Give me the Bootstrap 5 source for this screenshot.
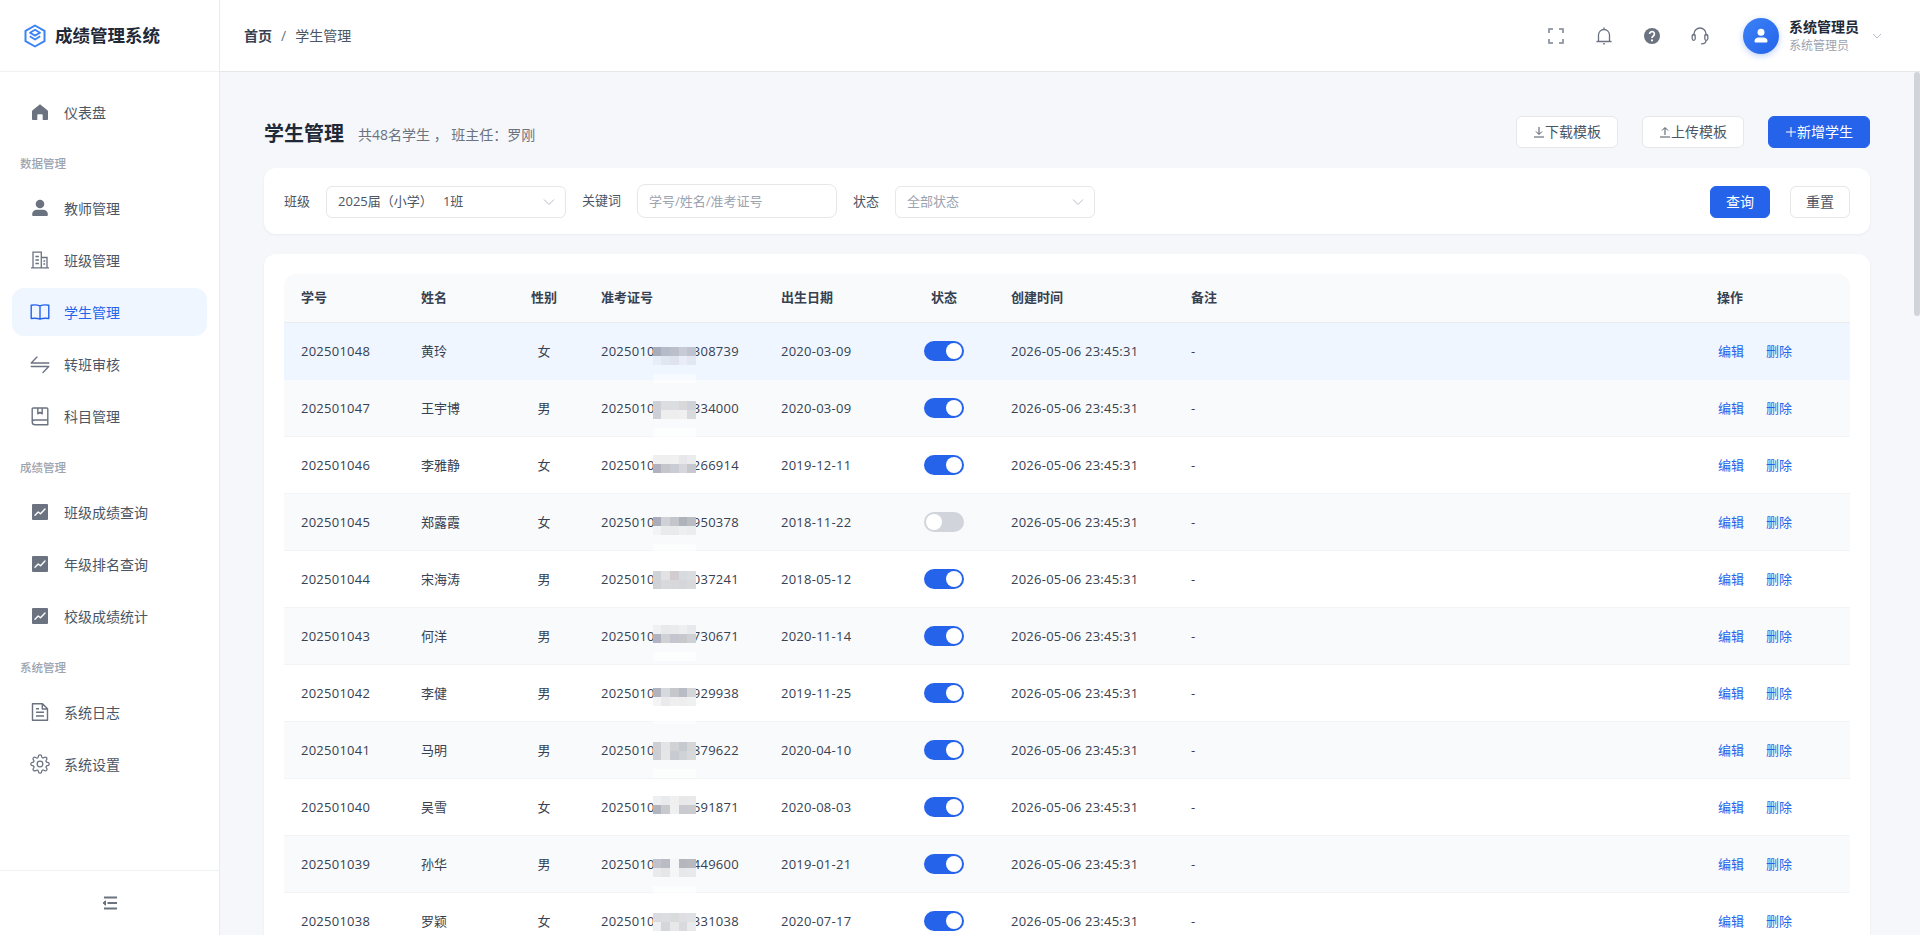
<!DOCTYPE html>
<html lang="zh-CN">

<head>
  <meta charset="UTF-8">
  <title>成绩管理系统</title>
  <meta name="viewport" content="width=device-width, initial-scale=1">
  <link href="https://cdn.jsdelivr.net/npm/bootstrap@5.3.0/dist/css/bootstrap.min.css" rel="stylesheet">
  <style>
    body {
      font-family: "Open Sans", "Noto Sans CJK SC", sans-serif;
      font-size: 13px;
      color: #374151;
      background: #f5f7fb;
    }

    /* sidebar */
    .side {
      width: 220px;
      border-right: 1px solid #e9ebef;
    }

    .brand {
      height: 72px;
      padding-left: 24px;
      gap: 9px;
      border-bottom: 1px solid #f0f1f4;
      font-size: 17.5px;
      font-weight: 700;
      color: #1f2937;
    }

    .side-nav {
      padding: 16px 12px 0;
    }

    .side-link {
      height: 48px;
      margin-bottom: 4px;
      padding-left: 18px;
      gap: 14px;
      border-radius: 12px;
      font-size: 14px;
      color: #4b5563;
      text-decoration: none;
    }

    .side-link svg {
      width: 20px;
      height: 20px;
      color: #6b7280;
      flex-shrink: 0;
    }

    .side-link.on {
      background: #eff6ff;
      color: #2563eb;
    }

    .side-link.on svg {
      color: #2563eb;
    }

    .side-title {
      margin: 20px 0 12px 8px;
      font-size: 11.5px;
      line-height: 16px;
      font-weight: 500;
      color: #9ca3af;
    }

    .side-foot {
      height: 65px;
      border-top: 1px solid #f0f1f4;
    }

    /* header */
    .top-bar {
      height: 72px;
      border-bottom: 1px solid #e5e7eb;
      padding: 0 37px 0 24px;
    }

    .crumbs {
      --bs-breadcrumb-margin-bottom: 0;
      --bs-breadcrumb-item-padding-x: 9px;
      --bs-breadcrumb-divider-color: #6b7280;
      font-size: 14px;
    }

    .crumbs a {
      color: #374151;
      font-weight: 600;
      text-decoration: none;
    }

    .crumbs .active {
      color: #4b5563;
    }

    .top-icon {
      width: 20px;
      height: 20px;
      color: #6b7280;
    }

    .top-icons {
      gap: 28px;
      margin-right: 33px;
    }

    .avatar {
      width: 36px;
      height: 36px;
      background: linear-gradient(135deg, #3b82f6, #2563eb);
      box-shadow: 0 2px 6px rgba(37, 99, 235, .3);
    }

    .user-info {
      margin-left: 10px;
    }

    .user-name {
      font-size: 14px;
      line-height: 19px;
      font-weight: 600;
      color: #1f2937;
    }

    .user-role {
      font-size: 12px;
      line-height: 19px;
      color: #9ca3af;
    }

    .user-arrow {
      margin-left: 12px;
    }

    /* content */
    .page-scroll {
      background: #f5f7fb;
    }

    .scroll-thumb {
      position: absolute;
      top: 0;
      right: 0;
      width: 6px;
      height: 244px;
      background: #d1d5db;
      border-radius: 3px;
    }

    .page-inner {
      padding: 44px 50px 20px 44px;
    }

    .title-row {
      height: 32px;
      margin-bottom: 20px;
    }

    .title-block {
      margin-top: 3px;
      gap: 14px;
    }

    .page-title {
      font-size: 20px;
      font-weight: 700;
      color: #1f2937;
    }

    .page-sub {
      font-size: 14px;
      color: #6b7280;
    }

    .btn-plain,
    .btn-main {
      height: 32px;
      padding: 0;
      border-radius: 6px;
      font-size: 14px;
      line-height: 30px;
    }

    .btn-plain {
      background: #fff;
      border: 1px solid #e5e7eb;
      color: #4b5563;
    }

    .btn-main {
      background: #2563eb;
      border: 1px solid #2563eb;
      color: #fff;
    }

    .btn-wide {
      width: 102px;
    }

    .btn-short {
      width: 60px;
    }

    .btn-wide svg {
      width: 12px;
      height: 12px;
      vertical-align: -1px;
    }

    .panel {
      background: #fff;
      border-radius: 12px;
      box-shadow: 0 1px 3px rgba(17, 24, 39, .05);
    }

    .filter-bar {
      padding: 16px 20px;
      margin-bottom: 20px;
      gap: 16px;
    }

    .filter-btns {
      gap: 20px;
    }

    .filter-label {
      color: #4b5563;
    }

    .filter-select {
      height: 32px;
      padding: 0 30px 0 11px;
      border: 1px solid #e5e7eb;
      border-radius: 6px;
      font-size: 13px;
      color: #4b5563;
      background-image: url("data:image/svg+xml,%3csvg xmlns='http://www.w3.org/2000/svg' viewBox='0 0 12 12'%3e%3cpath fill='none' stroke='%23b6bbc4' stroke-width='1' d='M1 3.5l5 5 5-5'/%3e%3c/svg%3e");
      background-size: 12px 12px;
      background-position: right 10px center;
    }

    .filter-select.empty {
      color: #9ca3af;
    }

    .filter-input {
      width: 200px;
      height: 34px;
      padding: 0 11px;
      border: 1px solid #e5e7eb;
      border-radius: 8px;
      font-size: 13px;
    }

    .filter-input::placeholder {
      color: #9ca3af;
    }

    /* table */
    .table-panel {
      padding: 20px;
    }

    .stu-table {
      table-layout: fixed;
      width: 1566px;
      margin: 0;
      font-size: 13px;
      --bs-table-color: #374151;
      --bs-table-border-color: #f3f4f6;
    }

    .stu-table>thead>tr>th {
      height: 48px;
      padding: 0 17px;
      vertical-align: middle;
      font-weight: 600;
      color: #374151;
      --bs-table-bg: #f9fafb;
      border-bottom: 1px solid #e9ecf1;
    }

    .stu-table>thead>tr>th:first-child {
      border-top-left-radius: 12px;
    }

    .stu-table>thead>tr>th:last-child {
      border-top-right-radius: 12px;
    }

    .stu-table>tbody>tr>td {
      height: 57px;
      padding: 2px 17px 0;
      vertical-align: middle;
    }

    .stu-table>tbody>tr>td.switch-cell {
      padding-top: 0;
    }

    .stu-table>tbody>tr>td.ops-cell {
      padding-left: 18px;
    }

    .stu-table>tbody>tr.alt>td {
      --bs-table-bg: #f9fafb;
    }

    .stu-table>tbody>tr.picked>td {
      --bs-table-bg: #eff6ff;
      border-bottom-color: #eff6ff;
    }

    .digits {
      letter-spacing: .25px;
    }

    .num-mask {
      display: inline-block;
      position: relative;
      width: 38px;
      height: 1em;
      vertical-align: baseline;
    }

    .mosaic {
      position: absolute;
      left: -2px;
      right: -3px;
      display: grid;
      grid-template-columns: repeat(5, 1fr);
      grid-auto-rows: 9px;
    }

    .mosaic::after {
      content: "";
      position: absolute;
      left: 0;
      right: 0;
      top: 27px;
      height: 9px;
      background: rgba(255, 255, 255, .5);
    }

    .stu-switch {
      min-height: 0;
      margin: 0;
      padding: 0;
    }

    .stu-switch .form-check-input {
      display: block;
      float: none;
      width: 40px;
      height: 20px;
      margin: 0 auto;
      border: 0;
      background-color: #d1d5db;
      background-size: 20px 20px;
      background-image: url("data:image/svg+xml,%3csvg xmlns='http://www.w3.org/2000/svg' viewBox='-4 -4 8 8'%3e%3ccircle r='3.2' fill='%23fff'/%3e%3c/svg%3e");
    }

    .stu-switch .form-check-input:checked {
      background-color: #2563eb;
    }

    .row-link {
      color: #2563eb;
      text-decoration: none;
      margin-right: 22px;
    }
  </style>
</head>

<body class="d-flex vh-100 overflow-hidden">

  <!-- icon sprite -->
  <svg class="d-none" xmlns="http://www.w3.org/2000/svg">
    <symbol id="i-home" viewBox="0 0 20 20"><path fill="currentColor" d="M10 2.2 2.6 8.3c-.4.3-.6.7-.6 1.200V17c0 .6.4 1 1 1h4.300v-4.800c0-.5.400-.9.900-.9h3.600c.5 0 .9.400.9.900V18H17c.6 0 1-.4 1-1V9.500c0-.5-.2-.9-.6-1.200z"/></symbol>
    <symbol id="i-user" viewBox="0 0 20 20"><circle cx="10" cy="6" r="4.300" fill="currentColor"/><path fill="currentColor" d="M2.200 16c0-2.600 2.200-4.200 4.600-4.200h6.400c2.400 0 4.600 1.600 4.600 4.200v1.200c0 .5-.4.800-.8.800H3c-.4 0-.8-.3-.8-.8z"/></symbol>
    <symbol id="i-building" viewBox="0 0 20 20"><path fill="none" stroke="currentColor" stroke-width="1.300" d="M1 17.800h18M3 17.800V2.200h8.300v15.600M11.300 7.500H17v10.300M5.400 6.500h3.500M5.400 10h3.500M5.400 13.500h3.500M13.400 11h1.800M13.400 14h1.800"/></symbol>
    <symbol id="i-book" viewBox="0 0 20 20"><path fill="none" stroke="currentColor" stroke-width="1.400" stroke-linejoin="round" d="M1.200 3.200c3-.5 6-.5 8.800.6 2.800-1.100 5.800-1.100 8.800-.6v13.300c-3-.4-6-.4-8.800.6-2.800-1-5.800-1-8.800-.6zM10 3.800v13.300"/></symbol>
    <symbol id="i-swap" viewBox="0 0 20 20"><path fill="none" stroke="currentColor" stroke-width="1.300" stroke-linecap="round" stroke-linejoin="round" d="M1.200 9h17.600M1.200 9 7 3M1.200 12.500h17.600M18.800 12.500l-5.800 6"/></symbol>
    <symbol id="i-subject" viewBox="0 0 20 20"><path fill="none" stroke="currentColor" stroke-width="1.400" stroke-linejoin="round" d="M2.200 16V3c0-.6.400-1 1-1h13.600c.6 0 1 .4 1 1v15.800H5c-1.500 0-2.800-1.200-2.800-2.800zM2.400 15.100c.4-.7 1.400-1.100 2.600-1.100h12.800M7.800 2v5.800l2.200-1.500 2.200 1.500V2"/></symbol>
    <symbol id="i-chart" viewBox="0 0 20 20"><rect x="2" y="2" width="16" height="16" rx="1" fill="currentColor"/><path fill="none" stroke="#fff" stroke-width="1.400" stroke-linecap="round" stroke-linejoin="round" d="m5 13.200 3.200-3.200 2.300 1.800L15 7"/></symbol>
    <symbol id="i-doc" viewBox="0 0 20 20"><path fill="none" stroke="currentColor" stroke-width="1.400" stroke-linejoin="round" d="M2.500 1.800h10l5 5v11.400h-15zM12.300 1.800v5.200h5.200M6 10.300h8M6 14h8M6 6.700h3"/></symbol>
    <symbol id="i-gear" viewBox="0 0 24 24"><g fill="none" stroke="currentColor" stroke-width="1.500" stroke-linejoin="round"><circle cx="12" cy="12" r="3.400"/><path d="M19.400 15a1.650 1.650 0 0 0 .33 1.820l.06.06a2 2 0 0 1 0 2.830 2 2 0 0 1-2.830 0l-.06-.06a1.650 1.650 0 0 0-1.820-.33 1.650 1.650 0 0 0-1 1.510V21a2 2 0 0 1-2 2 2 2 0 0 1-2-2v-.09A1.650 1.650 0 0 0 9 19.400a1.650 1.650 0 0 0-1.820.33l-.06.06a2 2 0 0 1-2.830 0 2 2 0 0 1 0-2.830l.06-.06a1.650 1.650 0 0 0 .33-1.820 1.650 1.650 0 0 0-1.510-1H3a2 2 0 0 1-2-2 2 2 0 0 1 2-2h.09A1.650 1.650 0 0 0 4.600 9a1.650 1.650 0 0 0-.33-1.820l-.06-.06a2 2 0 0 1 0-2.830 2 2 0 0 1 2.830 0l.06.06a1.650 1.650 0 0 0 1.820.33H9a1.650 1.650 0 0 0 1-1.510V3a2 2 0 0 1 2-2 2 2 0 0 1 2 2v.09a1.650 1.650 0 0 0 1 1.510 1.650 1.650 0 0 0 1.820-.33l.06-.06a2 2 0 0 1 2.830 0 2 2 0 0 1 0 2.830l-.06.06a1.650 1.650 0 0 0-.33 1.820V9a1.650 1.650 0 0 0 1.510 1H21a2 2 0 0 1 2 2 2 2 0 0 1-2 2h-.09a1.650 1.650 0 0 0-1.510 1z"/></g></symbol>
  </svg>

  <!-- Sidebar -->
  <aside class="side d-flex flex-column flex-shrink-0 bg-white">
    <div class="brand d-flex align-items-center">
      <svg width="22" height="24" viewBox="0 0 22 24" fill="none" stroke="#3b82f6" stroke-width="2" stroke-linejoin="round">
        <path d="M11 1.500 20.500 6.800v10.400L11 22.500 1.500 17.200V6.800z" />
        <path d="M11 5.800 16 8.700 11 11.600 6 8.700z" stroke-width="1.800" />
        <path d="M5.800 12.300 11 15.500l5.200-3.200" stroke-width="1.800" />
      </svg>
      <span>成绩管理系统</span>
    </div>

    <nav class="side-nav flex-grow-1">
      <a class="side-link d-flex align-items-center" href="#"><svg><use href="#i-home" /></svg>仪表盘</a>

      <div class="side-title">数据管理</div>
      <a class="side-link d-flex align-items-center" href="#"><svg><use href="#i-user" /></svg>教师管理</a>
      <a class="side-link d-flex align-items-center" href="#"><svg><use href="#i-building" /></svg>班级管理</a>
      <a class="side-link on d-flex align-items-center" href="#"><svg><use href="#i-book" /></svg>学生管理</a>
      <a class="side-link d-flex align-items-center" href="#"><svg><use href="#i-swap" /></svg>转班审核</a>
      <a class="side-link d-flex align-items-center" href="#"><svg><use href="#i-subject" /></svg>科目管理</a>

      <div class="side-title">成绩管理</div>
      <a class="side-link d-flex align-items-center" href="#"><svg><use href="#i-chart" /></svg>班级成绩查询</a>
      <a class="side-link d-flex align-items-center" href="#"><svg><use href="#i-chart" /></svg>年级排名查询</a>
      <a class="side-link d-flex align-items-center" href="#"><svg><use href="#i-chart" /></svg>校级成绩统计</a>

      <div class="side-title">系统管理</div>
      <a class="side-link d-flex align-items-center" href="#"><svg><use href="#i-doc" /></svg>系统日志</a>
      <a class="side-link d-flex align-items-center" href="#"><svg><use href="#i-gear" /></svg>系统设置</a>
    </nav>

    <div class="side-foot d-flex align-items-center justify-content-center">
      <svg width="16" height="14" viewBox="0 0 16 14" fill="none" stroke="#6b7280" stroke-width="1.800">
        <path d="M2 1.500h13M5.500 7H15M2 12.500h13" />
        <path d="M3.500 4.800 1 7l2.500 2.200z" fill="#6b7280" stroke-width="1" />
      </svg>
    </div>
  </aside>

  <div class="d-flex flex-column flex-grow-1 overflow-hidden">
    <!-- Header -->
    <header class="top-bar d-flex align-items-center justify-content-between bg-white flex-shrink-0">
      <nav aria-label="breadcrumb">
        <ol class="breadcrumb crumbs">
          <li class="breadcrumb-item"><a href="#">首页</a></li>
          <li class="breadcrumb-item active" aria-current="page">学生管理</li>
        </ol>
      </nav>

      <div class="d-flex align-items-center">
        <div class="top-icons d-flex align-items-center">
          <svg class="top-icon" viewBox="0 0 20 20" fill="none" stroke="#7b8291" stroke-width="1.500">
            <path d="M3 7V3h4M13 3h4v4M17 13v4h-4M7 17H3v-4" />
          </svg>
          <svg class="top-icon" viewBox="0 0 20 20" fill="none" stroke="currentColor" stroke-width="1.300">
            <path d="M4.500 15V9a5.500 5.500 0 0 1 11 0v6M2.500 15.500h15M10 1.500v2" />
            <path d="M9.200 17.800h1.600" stroke-width="1.500" />
          </svg>
          <svg class="top-icon" viewBox="0 0 20 20">
            <circle cx="10" cy="10" r="8" fill="currentColor" />
            <path d="M7.600 8a2.400 2.400 0 1 1 3.700 2c-.9.600-1.300 1-1.300 1.900" fill="none" stroke="#fff" stroke-width="1.700" />
            <circle cx="10" cy="14.400" r="1.050" fill="#fff" />
          </svg>
          <svg class="top-icon" viewBox="0 0 20 20" fill="none" stroke="currentColor" stroke-width="1.300">
            <path d="M4 10V8a6 6 0 0 1 12 0v2" />
            <rect x="2.200" y="8.300" width="3" height="6" rx="1.500" />
            <rect x="14.800" y="8.300" width="3" height="6" rx="1.500" />
            <path d="M16 14.500c0 2-1.500 3.300-4.500 3.300" stroke-linecap="round" />
          </svg>
        </div>

        <div class="avatar rounded-circle d-flex align-items-center justify-content-center">
          <svg width="20" height="20" viewBox="0 0 20 20" fill="#fff">
            <circle cx="10" cy="6.300" r="3.500" />
            <path d="M3.500 15c0-2.400 2-3.600 4-3.600h5c2 0 4 1.200 4 3.600 0 1-.6 1.500-1.500 1.500H5c-.9 0-1.500-.5-1.500-1.500z" />
          </svg>
        </div>
        <div class="user-info">
          <div class="user-name">系统管理员</div>
          <div class="user-role">系统管理员</div>
        </div>
        <svg class="user-arrow" width="12" height="12" viewBox="0 0 12 12" fill="none" stroke="#b6bbc4">
          <path d="M2 4l4 4 4-4" />
        </svg>
      </div>
    </header>

    <!-- Content -->
    <main class="page-scroll flex-grow-1 overflow-hidden position-relative">
      <div class="scroll-thumb"></div>
      <div class="page-inner">
        <div class="title-row d-flex align-items-start justify-content-between">
          <div class="title-block d-flex align-items-center">
            <span class="page-title">学生管理</span>
            <span class="page-sub">共48名学生 ， 班主任：罗刚</span>
          </div>
          <div class="d-flex gap-4">
            <button class="btn btn-plain btn-wide" type="button"><svg viewBox="0 0 12 12" fill="none" stroke="currentColor"><path d="M6 1v7M3 5.500 6 8.500l3-3M1 11h10" /></svg>下载模板</button>
            <button class="btn btn-plain btn-wide" type="button"><svg viewBox="0 0 12 12" fill="none" stroke="currentColor"><path d="M6 9V2M3 4.500 6 1.500l3 3M1 11h10" /></svg>上传模板</button>
            <button class="btn btn-main btn-wide" type="button"><svg viewBox="0 0 12 12" fill="none" stroke="currentColor"><path d="M6 1v10M1 6h10" /></svg>新增学生</button>
          </div>
        </div>

        <!-- Filter -->
        <div class="panel filter-bar d-flex align-items-end">
          <div class="d-flex align-items-center gap-3">
            <label class="filter-label">班级</label>
            <select class="form-select filter-select" style="width:240px">
              <option>2025届（小学）&nbsp;&nbsp;&nbsp;1班</option>
            </select>
          </div>
          <div class="d-flex align-items-center gap-3">
            <label class="filter-label">关键词</label>
            <input class="form-control filter-input" type="text" placeholder="学号/姓名/准考证号">
          </div>
          <div class="d-flex align-items-center gap-3">
            <label class="filter-label">状态</label>
            <select class="form-select filter-select empty" style="width:200px">
              <option>全部状态</option>
            </select>
          </div>
          <div class="filter-btns d-flex ms-auto">
            <button class="btn btn-main btn-short" type="button">查询</button>
            <button class="btn btn-plain btn-short" type="button">重置</button>
          </div>
        </div>

        <!-- Student table -->
        <div class="panel table-panel">
          <table class="table stu-table">
            <colgroup>
              <col style="width:120px">
              <col style="width:100px">
              <col style="width:80px">
              <col style="width:180px">
              <col style="width:130px">
              <col style="width:100px">
              <col style="width:180px">
              <col>
              <col style="width:150px">
            </colgroup>
            <thead>
              <tr>
                <th>学号</th>
                <th>姓名</th>
                <th class="text-center">性别</th>
                <th>准考证号</th>
                <th>出生日期</th>
                <th class="text-center">状态</th>
                <th>创建时间</th>
                <th>备注</th>
                <th>操作</th>
              </tr>
            </thead>
            <tbody id="student-rows"></tbody>
          </table>
        </div>
      </div>
    </main>
  </div>

  <script src="https://cdn.jsdelivr.net/npm/bootstrap@5.3.0/dist/js/bootstrap.bundle.min.js"></script>
  <script>
    // top: offset of the mosaic from the text, cells: colours of its two rows
    const students = [
      { id: '202501048', name: '黄玲', sex: '女', tail: '308739', birth: '2020-03-09', on: true, top: 4, cells: '#a7adbc #b6bbc9 #bbbfcb #c7cbd6 #bfc3d0 #e8eef8 #e1e6f1 #dfe3ee #e8edf7 #e2e7f2' },
      { id: '202501047', name: '王宇博', sex: '男', tail: '334000', birth: '2020-03-09', on: true, top: 1, cells: '#cdd0d6 #dcdde1 #dcdde0 #d8d8da #cfd2d8 #cdd0d6 #eeeeef #eeeeee #f0f0f0 #d8dade' },
      { id: '202501046', name: '李雅静', sex: '女', tail: '266914', birth: '2019-12-11', on: true, top: -2, cells: '#efeff0 #efeff0 #f0f0f0 #e8e8ea #ececee #b0b3bf #c4c6cc #c9ccd2 #d6d7dc #c6c8cd' },
      { id: '202501045', name: '郑露霞', sex: '女', tail: '950378', birth: '2018-11-22', on: false, top: 3, cells: '#a9adb9 #cfd1d6 #c3c5ca #aeb2ba #b9bcc1 #f2f3f5 #e9eaec #e9eaeb #eeeff0 #ebecee' },
      { id: '202501044', name: '宋海涛', sex: '男', tail: '037241', birth: '2018-05-12', on: true, top: 0, cells: '#cfd2d7 #e2e2e3 #d0ccd0 #d7dadf #dadcdf #d0d2d6 #d8d9dc #d8d8da #d4d6d9 #d8d9db' },
      { id: '202501043', name: '何洋', sex: '男', tail: '730671', birth: '2020-11-14', on: true, top: -3, cells: '#eef0f2 #e8e9eb #eaebed #eeeff1 #e8e9ec #b0b4c0 #cfd1d5 #c3c6ce #c6c8cc #ced0d3' },
      { id: '202501042', name: '李健', sex: '男', tail: '929938', birth: '2019-11-25', on: true, top: 3, cells: '#b1b4bf #d6d9dd #c6c7ca #b8bcc4 #d4d5d7 #f4f4f6 #eaeaec #efeff0 #eeeeef #eff0f0' },
      { id: '202501041', name: '马明', sex: '男', tail: '879622', birth: '2020-04-10', on: true, top: 0, cells: '#cdcfd4 #e3e4e6 #d1d2d4 #c6c9cf #d4d6d8 #cbced3 #e5e6e6 #c8cbd1 #d0d3d6 #d8d9da' },
      { id: '202501040', name: '吴雪', sex: '女', tail: '691871', birth: '2020-08-03', on: true, top: -3, cells: '#eeeff0 #e9eaeb #f0f0f0 #e8e8ea #e8e9eb #b1b4bf #c7c9cd #f0f0f0 #c9cacf #c9cbcf' },
      { id: '202501039', name: '孙华', sex: '男', tail: '449600', birth: '2019-01-21', on: true, top: 3, cells: '#c0c3cc #b9bcc5 #f5f6f8 #b5b6bd #b8b9be #e8eaec #e4e6e8 #f5f6f8 #e7e8eb #e8e9ec' },
      { id: '202501038', name: '罗颖', sex: '女', tail: '331038', birth: '2020-07-17', on: true, top: 0, cells: '#dadbdf #dcdde0 #dadbdd #dfdfe3 #dfe1e4 #eff0f1 #d4d6d9 #e8e8ea #d8dadd #e8eaec' }
    ];

    function mosaic(s) {
      const cells = s.cells.split(' ').map(c => `<i style="background:${c}"></i>`).join('');
      return `<span class="mosaic" style="top:${s.top}px">${cells}</span>`;
    }

    function rowClass(i) {
      if (i === 0) return 'picked';
      return i % 2 === 1 ? 'alt' : '';
    }

    document.getElementById('student-rows').innerHTML = students.map((s, i) => `
      <tr class="${rowClass(i)}">
        <td class="digits">${s.id}</td>
        <td>${s.name}</td>
        <td class="text-center">${s.sex}</td>
        <td class="digits">2025010<span class="num-mask">${mosaic(s)}</span>${s.tail}</td>
        <td class="digits">${s.birth}</td>
        <td class="switch-cell">
          <div class="form-check form-switch stu-switch">
            <input class="form-check-input" type="checkbox" role="switch" ${s.on ? 'checked' : ''}>
          </div>
        </td>
        <td class="digits">2026-05-06 23:45:31</td>
        <td>-</td>
        <td class="ops-cell"><a class="row-link" href="#">编辑</a><a class="row-link" href="#">删除</a></td>
      </tr>
    `).join('');
  </script>
</body>

</html>
